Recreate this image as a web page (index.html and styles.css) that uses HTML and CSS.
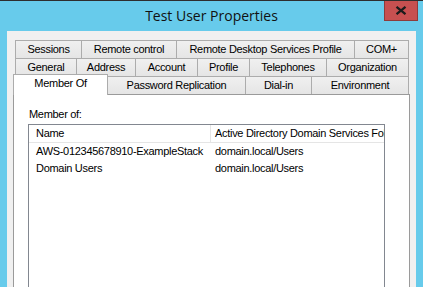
FILE: index.html
```html
<!DOCTYPE html>
<html>
<head>
<meta charset="utf-8">
<title>Test User Properties</title>
<link rel="stylesheet" href="styles.css">
</head>
<body>
<div class="window">
  <div class="titlebar">
    <div class="tb-side"></div>
    <div class="title">Test User Properties</div>
    <div class="tb-side tb-right">
      <div class="close">
        <svg width="12" height="9" viewBox="0 0 12 9"><path d="M1.5 0.8 L10.5 8.2 M10.5 0.8 L1.5 8.2" stroke="#1b1b1b" stroke-width="2.2" fill="none"/></svg>
      </div>
    </div>
  </div>
  <div class="client">
    <div class="tabrow">
      <div class="tab w-sessions">Sessions</div>
      <div class="tab w-remote">Remote control</div>
      <div class="tab w-rdsp">Remote Desktop Services Profile</div>
      <div class="tab w-com">COM+</div>
    </div>
    <div class="tabrow">
      <div class="tab w-general">General</div>
      <div class="tab w-address">Address</div>
      <div class="tab w-account">Account</div>
      <div class="tab w-profile">Profile</div>
      <div class="tab w-tel">Telephones</div>
      <div class="tab w-org">Organization</div>
    </div>
    <div class="tabrow">
      <div class="tab tab-selected w-member">Member Of</div>
      <div class="tab w-pwd">Password Replication</div>
      <div class="tab w-dial">Dial-in</div>
      <div class="tab w-env">Environment</div>
    </div>
    <div class="panel">
      <div class="label">Member of:</div>
      <div class="listview">
        <div class="lv-row lv-header">
          <div class="c1">Name</div>
          <div class="c2">Active Directory Domain Services Folder</div>
        </div>
        <div class="lv-row">
          <div class="c1">AWS-012345678910-ExampleStack</div>
          <div class="c2">domain.local/Users</div>
        </div>
        <div class="lv-row">
          <div class="c1">Domain Users</div>
          <div class="c2">domain.local/Users</div>
        </div>
      </div>
    </div>
  </div>
</div>
</body>
</html>
```
FILE: styles.css
```css
html, body {
  margin: 0;
  padding: 0;
}
body {
  width: 423px;
  height: 287px;
  overflow: hidden;
  background: #67cbeb;
  font-family: "Liberation Sans", Arial, sans-serif;
  font-size: 11px;
  letter-spacing: -0.3px;
  color: #000;
}
.window {
  height: 287px;
  display: flex;
  flex-direction: column;
  border-top: 1px solid #2e2e2e;
  box-sizing: border-box;
  background: #67cbeb;
}
.titlebar {
  height: 30px;
  display: grid;
  grid-template-columns: 1fr auto 1fr;
  align-items: start;
  flex: none;
}
.title {
  font-family: "Open Sans", "Liberation Sans", sans-serif;
  font-size: 14px;
  letter-spacing: 0;
  line-height: 30px;
  color: #111;
  white-space: nowrap;
}
.tb-right {
  display: flex;
  justify-content: flex-end;
  padding-right: 5px;
}
.close {
  width: 34px;
  height: 20px;
  box-sizing: border-box;
  background: #c75050;
  border: 1px solid #8e3b3b;
  border-top: none;
  display: flex;
  align-items: center;
  justify-content: center;
}
.client {
  flex: 1;
  margin: 0 7px;
  background: #f0f0f0;
  padding: 9px 6px 0 6px;
  display: flex;
  flex-direction: column;
  min-height: 0;
}
.tabrow {
  display: flex;
  height: 18px;
  margin-left: 2px;
  align-items: flex-start;
  flex: none;
}
.tab {
  height: 18px;
  box-sizing: border-box;
  border-top: 1px solid #acacac;
  border-left: 1px solid #acacac;
  background: linear-gradient(#f0f0f0, #e5e5e5);
  text-align: center;
  line-height: 17px;
  white-space: nowrap;
  overflow: hidden;
  flex: none;
}
.tab:last-child {
  border-right: 1px solid #acacac;
}
.tab-selected {
  position: relative;
  z-index: 1;
  height: 21px;
  margin-top: -2px;
  margin-left: -2px;
  margin-right: -1px;
  background: #fff;
  border-right: 1px solid #acacac;
  line-height: 17px;
}
.w-sessions { width: 66px; }
.w-remote { width: 95px; }
.w-rdsp { width: 178px; }
.w-com { width: 55px; }
.w-general { width: 61px; }
.w-address { width: 59px; }
.w-account { width: 62px; }
.w-profile { width: 52px; }
.w-tel { width: 77px; }
.w-org { width: 83px; }
.w-member { width: 95px; }
.w-pwd { width: 138px; }
.w-dial { width: 66px; }
.w-env { width: 98px; }

.panel {
  flex: 1;
  background: #fff;
  border: 1px solid #9a9a9a;
  border-bottom: none;
  display: flex;
  flex-direction: column;
  padding: 0 24px 0 14px;
  min-height: 0;
}
.label {
  margin-top: 12px;
  line-height: 15px;
  padding-left: 1px;
  flex: none;
}
.listview {
  margin-top: 2px;
  flex: 1;
  border: 1px solid #828790;
  border-bottom: none;
  overflow: hidden;
  min-height: 0;
}
.lv-row {
  display: flex;
  height: 17px;
  line-height: 17px;
  white-space: nowrap;
}
.lv-header {
  height: 18px;
  border-bottom: 1px solid #e5e5e5;
  box-sizing: border-box;
}
.c1 {
  width: 182px;
  flex: none;
  padding-left: 7px;
  box-sizing: border-box;
  overflow: hidden;
}
.c2 {
  flex: none;
  width: 210px;
  padding-left: 4px;
  box-sizing: border-box;
  overflow: hidden;
}
.lv-header .c1 {
  border-right: 1px solid #e5e5e5;
}
.lv-header .c2 {
  border-right: 1px solid #e5e5e5;
}
```
